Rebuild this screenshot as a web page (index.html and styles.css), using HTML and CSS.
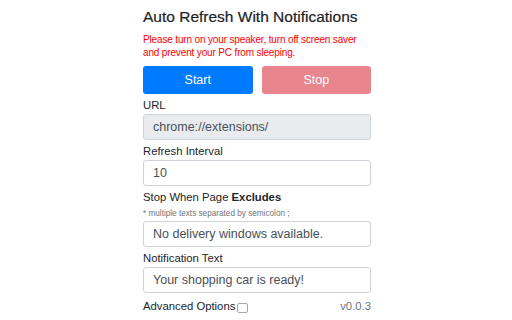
FILE: index.html
```html
<!DOCTYPE html>
<html>
<head>
<meta charset="utf-8">
<link rel="stylesheet" href="styles.css">
</head>
<body>
<div class="wrap">
  <h1 class="title">Auto Refresh With Notifications</h1>
  <p class="warn">Please turn on your speaker, turn off screen saver and prevent your PC from sleeping.</p>
  <div class="buttons">
    <button class="btn btn-start">Start</button>
    <button class="btn btn-stop">Stop</button>
  </div>
  <div class="field">
    <label class="label">URL</label>
    <div class="input readonly">chrome://extensions/</div>
  </div>
  <div class="field">
    <label class="label">Refresh Interval</label>
    <div class="input">10</div>
  </div>
  <div class="field">
    <label class="label">Stop When Page <b>Excludes</b></label>
    <div class="hint">* multiple texts separated by semicolon ;</div>
    <div class="input">No delivery windows available.</div>
  </div>
  <div class="field">
    <label class="label">Notification Text</label>
    <div class="input">Your shopping car is ready!</div>
  </div>
  <div class="footer">
    <label class="adv">Advanced Options<span class="check"></span></label>
    <span class="version">v0.0.3</span>
  </div>
</div>
</body>
</html>
```

FILE: styles.css
```css
* { box-sizing: border-box; }
body {
  margin: 0;
  background: #fff;
  font-family: "Liberation Sans", Arial, sans-serif;
  color: #212529;
}
.wrap {
  width: 228px;
  margin-left: 143px;
  padding-top: 7px;
}
.title {
  margin: 0;
  font-size: 15.5px;
  line-height: 20px;
  font-weight: 400;
  color: #1d2125;
  white-space: nowrap;
  -webkit-text-stroke: 0.2px #1d2125;
}
.warn {
  margin: 6px 0 0;
  font-size: 10px;
  line-height: 13px;
  letter-spacing: -0.15px;
  color: #ff0000;
}
.buttons {
  display: grid;
  grid-template-columns: 1fr 1fr;
  gap: 9px;
  margin-top: 7px;
}
.btn {
  height: 28px;
  border: none;
  border-radius: 3px;
  color: #fff;
  font-family: inherit;
  font-size: 12.5px;
  padding: 0;
}
.btn-start { background: #007bff; }
.btn-stop { background: #e8858d; }
.field {
  display: flex;
  flex-direction: column;
}
.label {
  display: block;
  margin-top: 3px;
  font-size: 11.3px;
  line-height: 17px;
  color: #212529;
}
.label b { font-weight: 700; }
.hint {
  font-size: 8.2px;
  line-height: 15px;
  color: #6c757d;
}
.input {
  height: 26px;
  border: 1px solid #ced4da;
  border-radius: 3px;
  padding: 0 9px;
  font-size: 12.5px;
  line-height: 24px;
  color: #495057;
  background: #fff;
}
.input.readonly { background: #e9ecef; }
.footer {
  display: flex;
  justify-content: space-between;
  align-items: baseline;
  margin-top: 5px;
  font-size: 11.3px;
  line-height: 17px;
}
.adv {
  display: flex;
  align-items: center;
}
.check {
  display: inline-block;
  width: 11px;
  height: 10px;
  margin-left: 2px;
  margin-top: 2px;
  border: 1px solid #a8a8a8;
  border-radius: 2px;
  background: #fff;
}
.version { color: #6c757d; }
```
